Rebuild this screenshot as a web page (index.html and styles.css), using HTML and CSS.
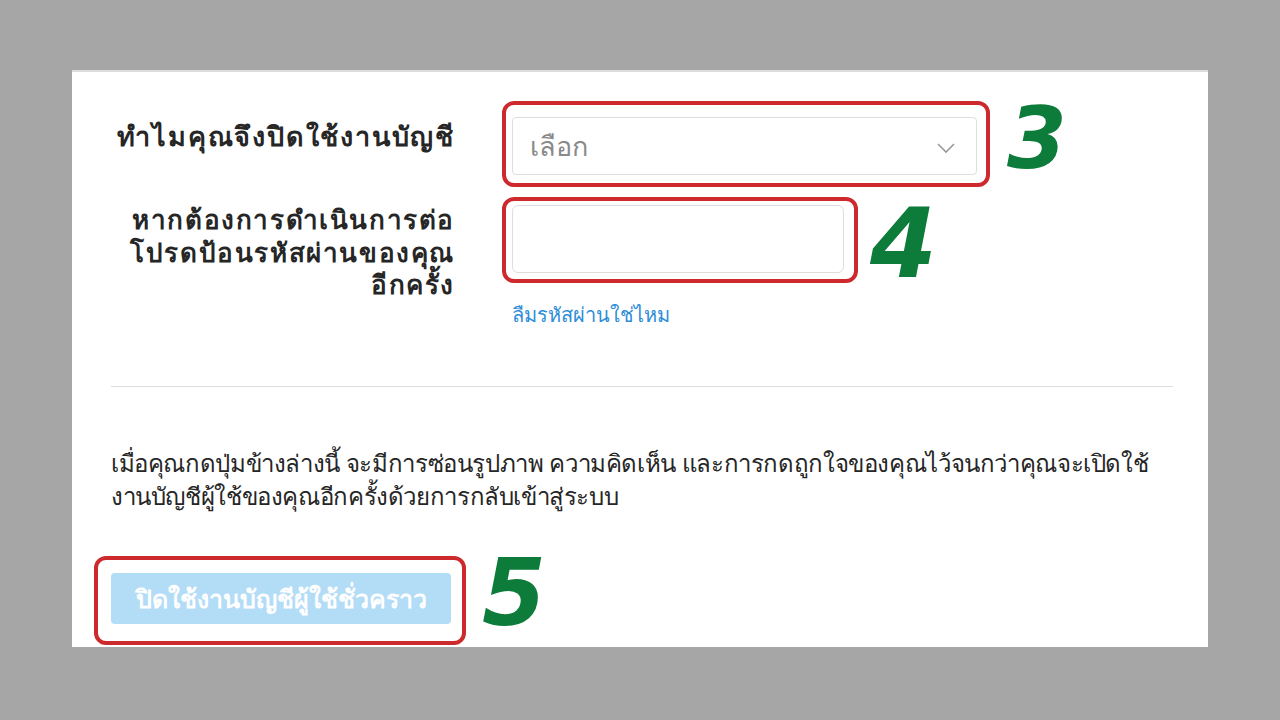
FILE: index.html
```html
<!DOCTYPE html>
<html lang="th">
<head>
<meta charset="utf-8">
<title>ปิดใช้งานบัญชีผู้ใช้ชั่วคราว</title>
<link rel="stylesheet" href="styles.css">
</head>
<body>
<div class="panel">
  <div class="row row-reason">
    <div class="label">ทำไมคุณจึงปิดใช้งานบัญชี</div>
    <div class="control">
      <div class="annot annot-select">
        <div class="select">
          <span class="placeholder">เลือก</span>
          <svg class="chev" width="20" height="12" viewBox="0 0 20 12"><polyline points="2,2 10,10 18,2" fill="none" stroke="#9a9a9a" stroke-width="1.6"/></svg>
        </div>
      </div>
      <span class="step step3">3</span>
    </div>
  </div>
  <div class="row row-pass">
    <div class="label">หากต้องการดำเนินการต่อ<br>โปรดป้อนรหัสผ่านของคุณ<br>อีกครั้ง</div>
    <div class="control-col">
      <div class="control">
        <div class="annot annot-input">
          <div class="input"></div>
        </div>
        <span class="step step4">4</span>
      </div>
      <a class="forgot" href="#">ลืมรหัสผ่านใช่ไหม</a>
    </div>
  </div>
  <div class="divider"></div>
  <p class="note">เมื่อคุณกดปุ่มข้างล่างนี้ จะมีการซ่อนรูปภาพ ความคิดเห็น และการกดถูกใจของคุณไว้จนกว่าคุณจะเปิดใช้งานบัญชีผู้ใช้ของคุณอีกครั้งด้วยการกลับเข้าสู่ระบบ</p>
  <div class="control btn-row">
    <div class="annot annot-btn">
      <button class="btn" type="button">ปิดใช้งานบัญชีผู้ใช้ชั่วคราว</button>
    </div>
    <span class="step step5">5</span>
  </div>
</div>
</body>
</html>
```
FILE: styles.css
```css
html, body {
  margin: 0;
  padding: 0;
}
body {
  background: #a6a6a6;
  width: 1280px;
  height: 720px;
  overflow: hidden;
  padding-top: 70px;
  box-sizing: border-box;
  font-family: "Noto Sans", "DejaVu Sans", sans-serif;
  color: #262626;
}
.panel {
  margin-left: 72px;
  width: 1136px;
  height: 577px;
  background: #fff;
  border-top: 2px solid #dcdcdc;
  box-sizing: border-box;
  padding: 29px 35px 0 39px;
  overflow: hidden;
}
.row {
  display: grid;
  grid-template-columns: 344px 1fr;
  column-gap: 47px;
}
.label {
  font-weight: bold;
  font-size: 27px;
  letter-spacing: 1.8px;
  line-height: 32.5px;
  text-align: right;
  color: #262626;
  white-space: nowrap;
}
.row-reason .label {
  padding-top: 19px;
}
.row-pass {
  margin-top: 9px;
}
.row-pass .label {
  padding-top: 7px;
  font-size: 26px;
  letter-spacing: 1.6px;
}
.control {
  display: flex;
  align-items: center;
}
.control-col {
  display: flex;
  flex-direction: column;
  align-items: flex-start;
}
.annot {
  border: 4px solid #cc2a2d;
  border-radius: 12px;
  box-sizing: border-box;
}
.annot-select {
  width: 488px;
  height: 86px;
  padding: 12px 9px 8px 6px;
}
.select {
  height: 58px;
  border: 1px solid #dedede;
  border-radius: 4px;
  box-sizing: border-box;
  display: flex;
  align-items: center;
  justify-content: space-between;
  padding: 0 20px 0 17px;
}
.placeholder {
  font-size: 27px;
  color: #8a8a8a;
}
.chev {
  display: block;
  margin-top: 3px;
}
.annot-input {
  width: 356px;
  height: 86px;
  padding: 4px 10px 6px 6px;
}
.input {
  height: 100%;
  border: 1px solid #dedede;
  border-radius: 6px;
  box-sizing: border-box;
}
.step {
  font-family: "DejaVu Sans", sans-serif;
  font-weight: bold;
  font-style: italic;
  color: #0d7b39;
  line-height: 80px;
  height: 80px;
}
.step3 {
  font-size: 86px;
  margin-left: 17px;
  margin-top: -12px;
}
.step4 {
  font-size: 96px;
  margin-left: 12px;
  margin-top: 8px;
}
.step5 {
  font-size: 92px;
  margin-left: 16px;
  margin-top: -14px;
}
.forgot {
  margin-top: 19px;
  margin-left: 10px;
  font-size: 20px;
  line-height: 24px;
  color: #2f8ed8;
  text-decoration: none;
}
.divider {
  margin-top: 59px;
  height: 1px;
  background: #dedede;
}
.note {
  margin: 59px 0 0;
  font-size: 24px;
  letter-spacing: -0.38px;
  line-height: 33px;
  color: #262626;
  width: 1062px;
}
.btn-row {
  margin-top: 44px;
  margin-left: -17px;
}
.annot-btn {
  width: 372px;
  height: 89px;
  padding: 13px 11px 0 13px;
}
.btn {
  display: block;
  width: 340px;
  height: 51px;
  border: none;
  border-radius: 4px;
  background: #b3dcf7;
  color: #fff;
  font-family: inherit;
  font-weight: bold;
  font-size: 25px;
  padding: 0;
}
```
